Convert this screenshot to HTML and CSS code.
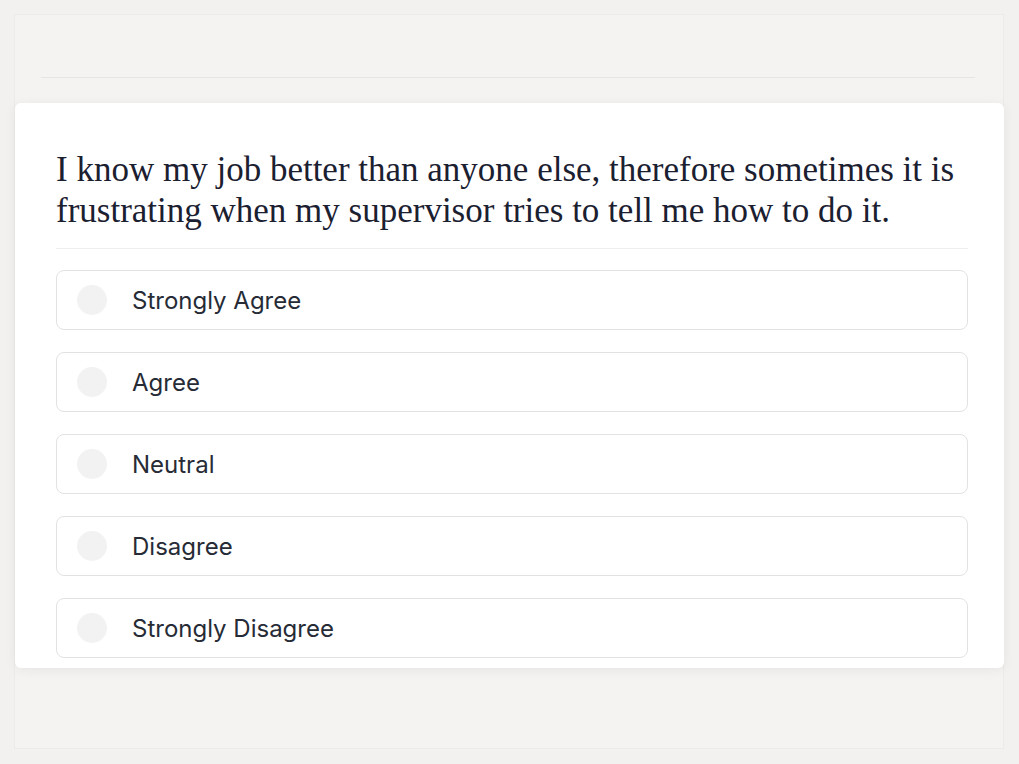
FILE: index.html
```html
<!DOCTYPE html>
<html lang="en">
<head>
    <meta charset="UTF-8">
    <title>Survey Question</title>
    <link rel="stylesheet" href="styles.css">
</head>
<body>
    <div class="backdrop">
        <div class="backdrop-rule"></div>
    </div>

    <div class="card">
        <h2 class="question">I know my job better than anyone else, therefore sometimes it is frustrating when my supervisor tries to tell me how to do it.</h2>
        <div class="options">
            <label class="option"><span class="dot"></span><span class="label">Strongly Agree</span></label>
            <label class="option"><span class="dot"></span><span class="label">Agree</span></label>
            <label class="option"><span class="dot"></span><span class="label">Neutral</span></label>
            <label class="option"><span class="dot"></span><span class="label">Disagree</span></label>
            <label class="option"><span class="dot"></span><span class="label">Strongly Disagree</span></label>
        </div>
    </div>
</body>
</html>
```

FILE: styles.css
```css
html, body {
    margin: 0;
    height: 100%;
}
body {
    font-family: Inter, "Noto Sans", sans-serif;
    background-color: #f2f1ef;
    position: relative;
    overflow: hidden;
}
/* faded page sitting behind the active card */
.backdrop {
    position: absolute;
    left: 14px;
    top: 14px;
    width: 990px;
    height: 735px;
    border: 1px solid #ecebe8;
    background-color: #f4f3f1;
    box-sizing: border-box;
}
.backdrop-rule {
    margin: 62px 28px 0 26px;
    border-top: 1px solid #e6e5e2;
}
.card {
    position: absolute;
    left: 15px;
    top: 103px;
    width: 989px;
    height: 565px;
    box-sizing: border-box;
    background-color: #fff;
    border-radius: 6px;
    box-shadow: 0 2px 12px rgba(0,0,0,0.06);
    padding: 46px 36px 0 41px;
}
.question {
    margin: 0;
    font-family: "Liberation Serif", "DejaVu Serif", serif;
    font-weight: normal;
    font-size: 35px;
    line-height: 41px;
    color: #1b2030;
    padding-bottom: 17px;
    border-bottom: 1px solid #eeeeee;
}
.options {
    display: flex;
    flex-direction: column;
    gap: 22px;
    margin-top: 21px;
}
.option {
    display: flex;
    align-items: center;
    height: 60px;
    box-sizing: border-box;
    border: 1px solid #e2e2e2;
    border-radius: 8px;
    padding-left: 20px;
}
.dot {
    width: 30px;
    height: 30px;
    border-radius: 50%;
    background-color: #f2f2f2;
}
.label {
    margin-left: 25px;
    font-size: 24px;
    color: #262b36;
}
```
